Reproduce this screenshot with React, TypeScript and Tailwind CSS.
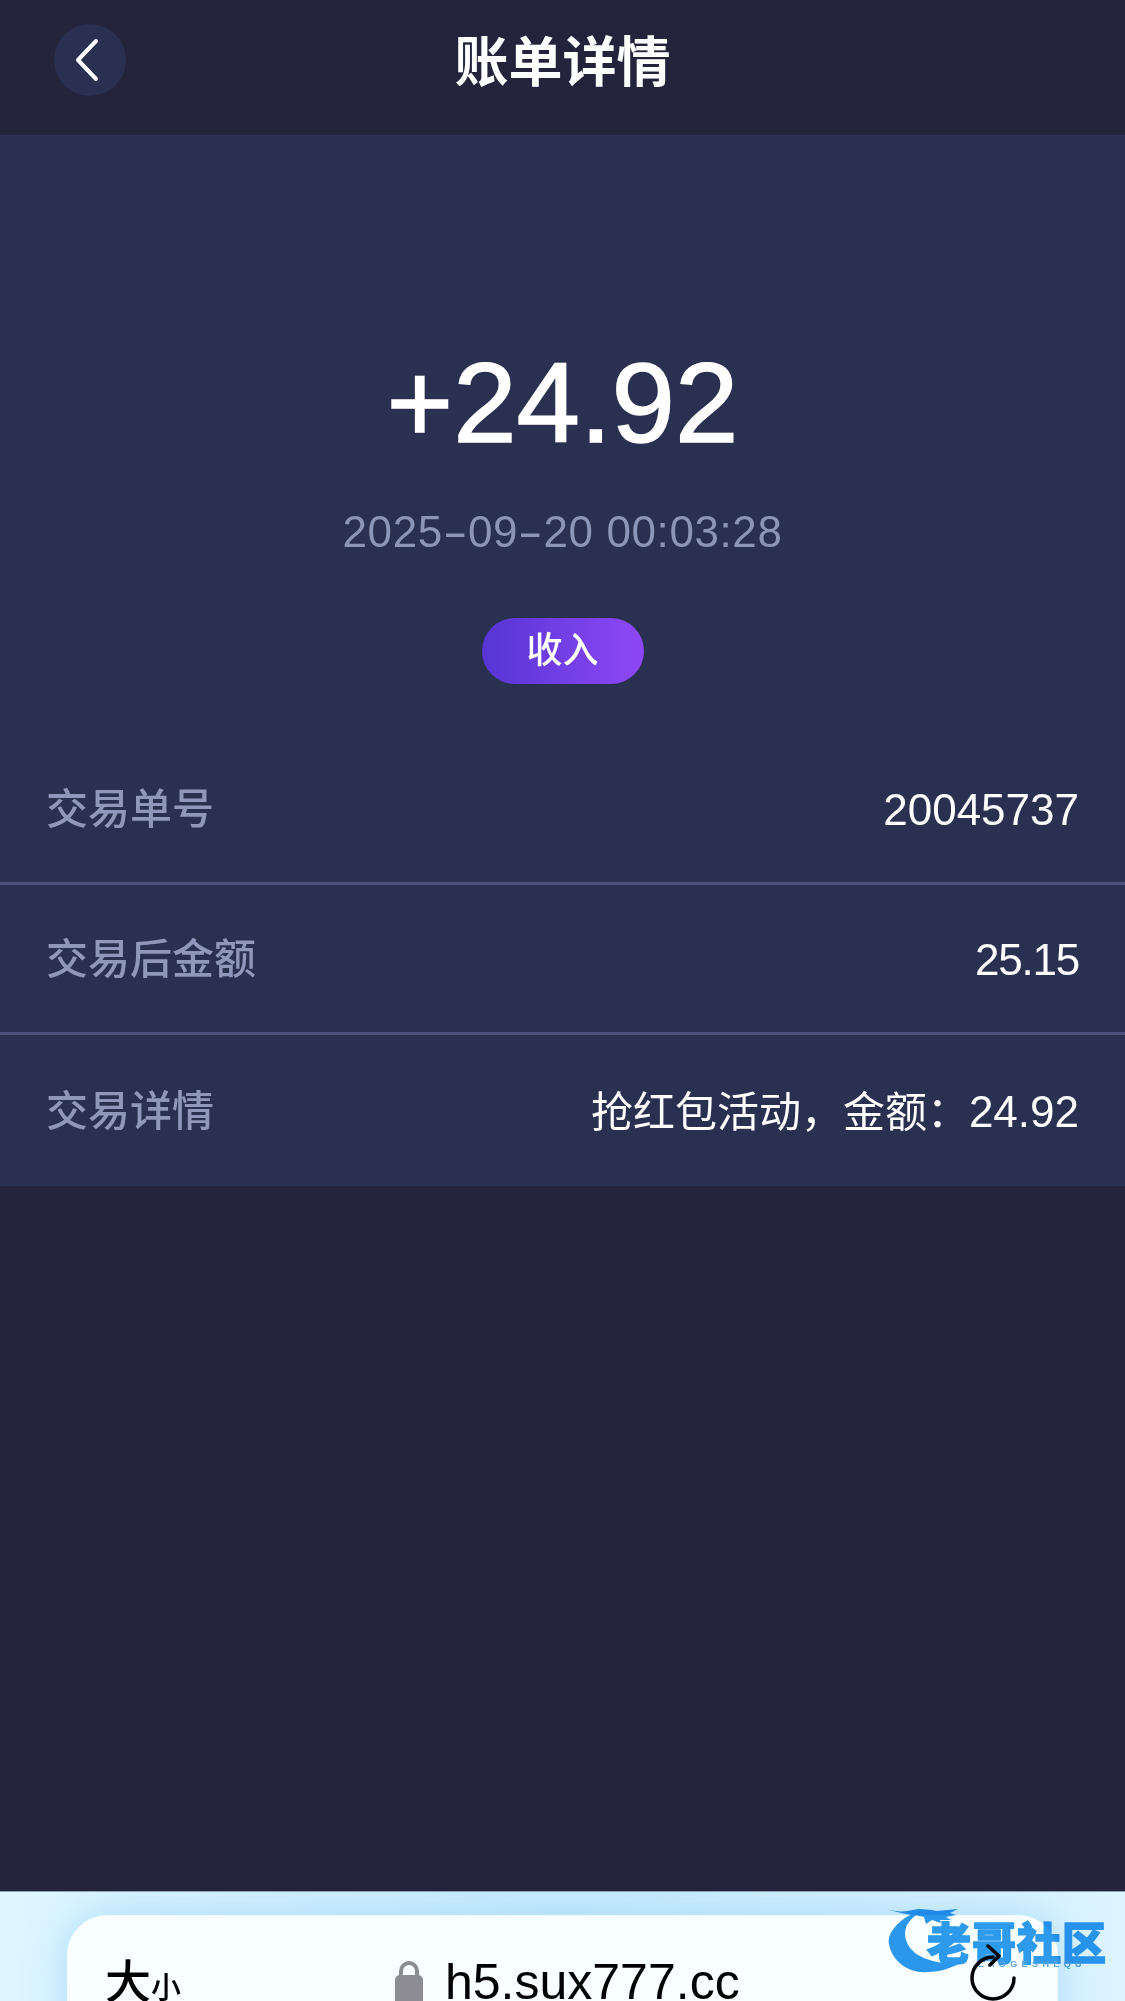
const SANS = "font-['Liberation_Sans','Noto_Sans_CJK_SC',sans-serif]";

function Row({ label, children, last }: { label: string; children: React.ReactNode; last?: boolean }) {
  return (
    <div className={`flex items-center justify-between px-[46px] pt-[3px] ${last ? "h-[151px]" : "h-[150px] border-b-[3px] border-[#4a5079]"}`}>
      <span className="text-[42px] leading-[50px] font-medium text-[#8f97ba]">{label}</span>
      <span className="text-[42px] leading-[50px] text-white">{children}</span>
    </div>
  );
}

function Watermark() {
  return (
    <div className="absolute left-[880px] top-[1900px] w-[240px] h-[80px] mix-blend-multiply">
      <svg width="100" height="80" viewBox="0 0 100 80" className="absolute left-0 top-0">
        <path d="M30 15C14 24 7 36 9 44C12 62 30 74 48 72C60 72 72 68 82 62C66 65 50 62 38 55C27 48 22 36 27 25C30 20 34 16 38 14Z" fill="#2b98ec" />
        <path d="M7 9C15 12 25 12 33 10C40 8 46 10 52 10L56 11L78 9L70 13L76 15L66 17L71 20L60 20L61 23L52 20L46 24L44 17C36 15 20 14 7 9Z" fill="#2b98ec" />
      </svg>
      <div className={`absolute left-[47px] top-[21px] text-[44px] leading-[48px] font-black tracking-[1px] whitespace-nowrap text-[#2e9bec] [-webkit-text-stroke:1.5px_#2e9bec] ${SANS}`}>老哥社区</div>
      <div className={`absolute left-[98px] top-[59px] text-[9px] leading-[10px] font-bold tracking-[4.4px] whitespace-nowrap text-[#5aa6dc] ${SANS}`}>LAOGESHEQU</div>
    </div>
  );
}

export default function App() {
  return (
    <div className={`relative flex flex-col w-[1125px] h-[2001px] overflow-hidden bg-[#23233b] ${SANS}`}>
      <div className="grid grid-cols-[1fr_auto_1fr] items-center h-[135px] shrink-0 px-[54px] pb-[15px]">
        <div className="flex items-center justify-center w-[72px] h-[72px] rounded-full bg-[#2a3050]">
          <svg width="26" height="44" viewBox="0 0 26 44" fill="none" className="mr-[7px]">
            <path d="M22 3 L4 22 L22 41" stroke="white" strokeWidth="4" strokeLinecap="round" strokeLinejoin="round" />
          </svg>
        </div>
        <div className="pt-[5px] text-[54px] leading-[64px] font-semibold text-white">账单详情</div>
        <div />
      </div>

      <div className="shrink-0 bg-[#2a3050]">
        <div className="flex flex-col items-center pt-[200px]">
          <div className="text-[114px] leading-[136px] text-white [-webkit-text-stroke:1.5px_white]">+24.92</div>
          <div className="mt-[35px] text-[44px] leading-[52px] tracking-[0.6px] text-[#8a95b8]">
            2025<span className="inline-block mx-[5px] scale-x-[1.7]">-</span>09<span className="inline-block mx-[5px] scale-x-[1.7]">-</span>20 00:03:28
          </div>
          <div className="mt-[60px] flex items-center justify-center w-[162px] h-[66px] rounded-full bg-gradient-to-r from-[#5635d5] to-[#8f47f6] text-[36px] font-medium text-white">收入</div>
        </div>
        <div className="mt-[51px]">
          <Row label="交易单号"><span className="text-[44px]">20045737</span></Row>
          <Row label="交易后金额"><span className="text-[44px] tracking-[-1.2px]">25.15</span></Row>
          <Row label="交易详情" last>
            {"抢红包活动\uFF0C金额\uFF1A"}<span className="text-[44px]">24.92</span>
          </Row>
        </div>
      </div>

      <div className="flex-1" />

      <div className="shrink-0 h-[110px] overflow-hidden border-t border-[#8fa3b5] bg-gradient-to-r from-[#dff6ff] via-[#c8ebfd] to-[#dcf4ff] px-[67px] pt-[23px]">
        <div className="flex items-start h-[200px] rounded-[40px] bg-[#f9feff] pl-[38px] pr-[41px] pt-[38px] shadow-[0_0_40px_rgba(150,210,250,0.7)]">
          <div className="flex items-end w-[290px] pt-[1px] text-black font-medium">
            <span className="text-[46px] leading-[56px]">大</span>
            <span className="text-[30px] leading-[44px]">小</span>
          </div>
          <svg width="28" height="64" viewBox="0 0 28 64" fill="none" className="mt-[8px] shrink-0">
            <path d="M6 15V10a8 8 0 0 1 16 0v5" stroke="#8c8c92" strokeWidth="4" />
            <rect x="0" y="14" width="28" height="34" rx="5" fill="#8c8c92" />
          </svg>
          <div className="ml-[22px] text-[50px] leading-[58px] text-black">h5.sux777.cc</div>
          <svg width="48" height="60" viewBox="0 0 48 60" fill="none" className="ml-auto shrink-0 -mt-[9px]">
            <path d="M24 13C12.5 13 3 22.5 3 34C3 45.5 12.5 55 24 55C35.5 55 45 45.5 45 34" stroke="black" strokeWidth="3.5" strokeLinecap="round" />
            <path d="M19 2L30 12L21 21" stroke="black" strokeWidth="3.5" strokeLinecap="round" strokeLinejoin="round" />
          </svg>
        </div>
      </div>

      <Watermark />
    </div>
  );
}
